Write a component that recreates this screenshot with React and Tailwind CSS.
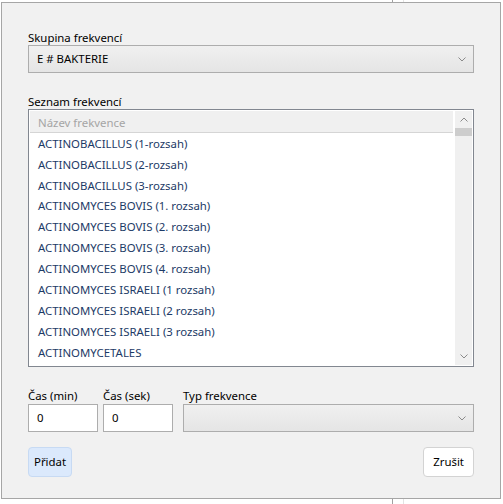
import React from 'react'

const items = [
  'ACTINOBACILLUS (1-rozsah)',
  'ACTINOBACILLUS (2-rozsah)',
  'ACTINOBACILLUS (3-rozsah)',
  'ACTINOMYCES BOVIS (1. rozsah)',
  'ACTINOMYCES BOVIS (2. rozsah)',
  'ACTINOMYCES BOVIS (3. rozsah)',
  'ACTINOMYCES BOVIS (4. rozsah)',
  'ACTINOMYCES ISRAELI (1 rozsah)',
  'ACTINOMYCES ISRAELI (2 rozsah)',
  'ACTINOMYCES ISRAELI (3 rozsah)',
  'ACTINOMYCETALES',
]

const Chevron = ({ up }) => (
  <svg width="8" height="5" viewBox="0 0 8 5" className={up ? 'rotate-180' : ''}>
    <path d="M0.5 0.5 L4 4 L7.5 0.5" fill="none" stroke="#8a8a8a" strokeWidth="1" />
  </svg>
)

const Combo = ({ value }) => (
  <div className="h-[28px] flex items-center justify-between border border-[#adadad] bg-gradient-to-b from-[#f0f0f0] to-[#e5e5e5] pl-[8px] pr-[7px] text-[#000]">
    <span>{value}</span>
    <Chevron />
  </div>
)

const Label = ({ children, className = '' }) => (
  <div className={`h-[14px] leading-[14px] whitespace-nowrap ${className}`}>{children}</div>
)

const App = () => {
  return (
    <div
      className="relative w-[503px] h-[504px] bg-white text-[11.4px] leading-none"
      style={{ fontFamily: '"Noto Sans", "DejaVu Sans", sans-serif' }}
    >
      {/* background window lines */}
      <div className="absolute left-[392px] top-0 w-px h-full bg-[#a0a0a0]" />
      <div className="absolute left-[403px] top-0 w-px h-full bg-[#e3e3e3]" />

      {/* dialog */}
      <div className="absolute left-[1px] top-[2px] w-[500px] h-[497px] bg-[#f1f1f1] border border-[#a6a6a6] px-[26px] pt-[28px]">
        <Label>Skupina frekvencí</Label>
        <Combo value="E # BAKTERIE" />

        <Label className="mt-[22px]">Seznam frekvencí</Label>
        <div className="h-[258px] border border-[#828790] bg-white flex p-px">
          <div className="flex-1 flex flex-col min-w-0">
            <div className="h-[22px] mr-[2px] bg-[#f0f0f0] border-b border-[#d5d5d5] flex items-center pt-[2px] pl-[8px] text-[#a5a5a5]">
              Název frekvence
            </div>
            <div className="flex flex-col">
              {items.map((it) => (
                <div key={it} className="h-[20.9px] flex items-center pl-[8px] text-[#1c3a66] whitespace-nowrap">
                  {it}
                </div>
              ))}
            </div>
          </div>
          <div className="w-[17px] bg-[#f0f0f0] flex flex-col items-center">
            <div className="h-[17px] flex items-center justify-center">
              <Chevron up />
            </div>
            <div className="w-full h-[8px] bg-[#cdcdcd]" />
            <div className="flex-1" />
            <div className="h-[17px] flex items-center justify-center">
              <Chevron />
            </div>
          </div>
        </div>

        <div className="mt-[22px] flex gap-[5px]">
          <div className="w-[70px]">
            <Label className="mb-[1px]">Čas (min)</Label>
            <div className="h-[28px] border border-[#adadad] bg-white flex items-center pl-[8px]">0</div>
          </div>
          <div className="w-[70px]">
            <Label className="mb-[1px]">Čas (sek)</Label>
            <div className="h-[28px] border border-[#adadad] bg-white flex items-center pl-[8px]">0</div>
          </div>
          <div className="flex-1 ml-[5px]">
            <Label className="mb-[1px]">Typ frekvence</Label>
            <Combo value="" />
          </div>
        </div>

        <div className="mt-[15px] flex justify-between">
          <button className="h-[30px] px-[5px] rounded-[4px] bg-[#dbe9fc] border border-[#c7daf3] text-[#000]">
            Přidat
          </button>
          <button className="h-[30px] px-[9px] rounded-[4px] bg-white border border-[#d3d3d3] text-[#000]">
            Zrušit
          </button>
        </div>
      </div>
    </div>
  )
}

export default App
